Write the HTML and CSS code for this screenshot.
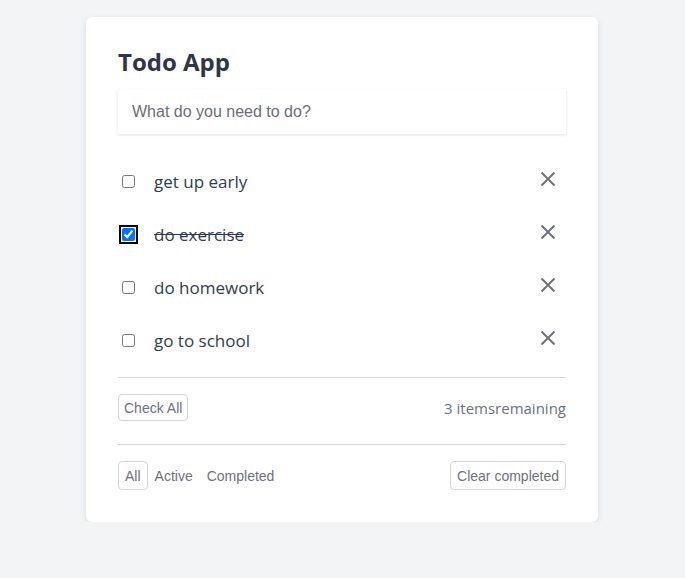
FILE: index.html
```html
<!DOCTYPE html>
<html lang="en">
<head>
<meta charset="utf-8">
<title>Todo App</title>
<link rel="stylesheet" href="styles.css">
</head>
<body>
<div class="page">
  <div class="card">
    <h1 class="title">Todo App</h1>
    <input class="new-todo" type="text" placeholder="What do you need to do?">
    <ul class="todo-list">
      <li class="todo">
        <input type="checkbox" class="toggle">
        <span class="label">get up early</span>
        <button class="remove" aria-label="remove"><svg viewBox="0 0 16 16" width="16" height="16"><path d="M1.5 1.5L14.5 14.5M14.5 1.5L1.5 14.5" stroke="#6b7280" stroke-width="2" fill="none"/></svg></button>
      </li>
      <li class="todo done">
        <input type="checkbox" class="toggle focused" checked>
        <span class="label">do exercise</span>
        <button class="remove" aria-label="remove"><svg viewBox="0 0 16 16" width="16" height="16"><path d="M1.5 1.5L14.5 14.5M14.5 1.5L1.5 14.5" stroke="#6b7280" stroke-width="2" fill="none"/></svg></button>
      </li>
      <li class="todo">
        <input type="checkbox" class="toggle">
        <span class="label">do homework</span>
        <button class="remove" aria-label="remove"><svg viewBox="0 0 16 16" width="16" height="16"><path d="M1.5 1.5L14.5 14.5M14.5 1.5L1.5 14.5" stroke="#6b7280" stroke-width="2" fill="none"/></svg></button>
      </li>
      <li class="todo">
        <input type="checkbox" class="toggle">
        <span class="label">go to school</span>
        <button class="remove" aria-label="remove"><svg viewBox="0 0 16 16" width="16" height="16"><path d="M1.5 1.5L14.5 14.5M14.5 1.5L1.5 14.5" stroke="#6b7280" stroke-width="2" fill="none"/></svg></button>
      </li>
    </ul>
    <div class="bar bar-top">
      <button class="btn btn-check">Check All</button>
      <span class="remaining">3 itemsremaining</span>
    </div>
    <div class="bar bar-bottom">
      <div class="filters">
        <button class="btn filter active">All</button>
        <button class="btn filter">Active</button>
        <button class="btn filter">Completed</button>
      </div>
      <button class="btn btn-clear">Clear completed</button>
    </div>
  </div>
</div>
</body>
</html>
```
FILE: styles.css
```css
* { box-sizing: border-box; }
html, body { margin: 0; padding: 0; }
body {
  background: #f3f4f6;
  font-family: "Open Sans", "Noto Sans", sans-serif;
  color: #2c3e50;
}
.page {
  display: flex;
  justify-content: flex-start;
  padding: 17px 0 0 86px;
}
.card {
  width: 512px;
  background: #fff;
  border-radius: 6px;
  box-shadow: 0 2px 6px rgba(0,0,0,0.1);
  padding: 32px 32px 32px;
}
.title {
  margin: 0 0 14px;
  font-size: 24px;
  line-height: 26px;
  font-weight: 700;
  color: #2d3748;
}
.new-todo {
  display: block;
  width: 100%;
  height: 45px;
  border: none;
  outline: none;
  padding: 0 14px;
  font-family: "Liberation Sans", Arial, sans-serif;
  font-size: 16px;
  background: #fff;
  box-shadow: 0 1px 3px rgba(0,0,0,0.12);
}
.new-todo::placeholder { color: #6b6f76; }
.todo-list {
  list-style: none;
  margin: 20px 0 0;
  padding: 0;
}
.todo {
  display: flex;
  align-items: center;
  height: 53px;
}
.toggle {
  margin: 0 19px 0 4px;
  width: 13px;
  height: 13px;
  flex: none;
  position: relative;
  top: 1px;
}
.toggle.focused {
  outline: 2px solid #000;
  outline-offset: 1px;
  border-radius: 2px;
}
.label {
  flex: 1;
  font-size: 17px;
  line-height: 24px;
  color: #2c3e50;
  position: relative;
  top: 1px;
}
.done .label { text-decoration: line-through; }
.remove {
  border: none;
  background: none;
  padding: 0;
  width: 16px;
  height: 16px;
  margin-right: 10px;
  display: flex;
  position: relative;
  top: -2px;
}
.bar {
  display: flex;
  align-items: center;
  justify-content: space-between;
  border-top: 1px solid #d1d5db;
}
.bar-top {
  margin-top: 11px;
  padding: 16px 0 23px;
}
.bar-bottom {
  padding: 16px 0 0;
}
.filters { display: flex; }
.btn {
  font-family: "Liberation Sans", Arial, sans-serif;
  font-size: 14px;
  line-height: 16px;
  height: 29px;
  color: #6b7280;
  background: #fff;
  border: 1px solid #d1d5db;
  border-radius: 4px;
  padding: 0 6px;
  margin: 0;
  cursor: pointer;
}
.btn-check {
  height: 27px;
  padding: 0 5px;
}
.filter { border-color: transparent; }
.filter.active { border-color: #d1d5db; }
.remaining {
  font-size: 15px;
  color: #6b7280;
}
```
